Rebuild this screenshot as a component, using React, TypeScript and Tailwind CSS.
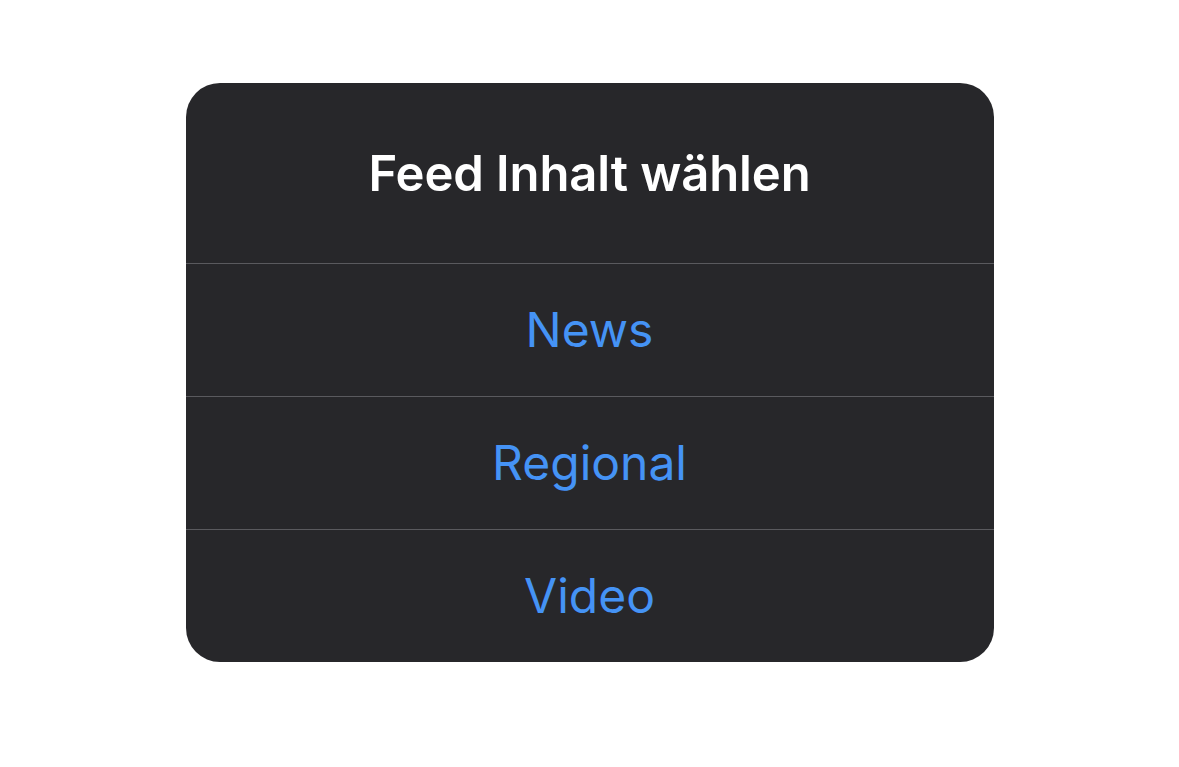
export default function App() {
  const options = ['News', 'Regional', 'Video']

  return (
    <div className="min-h-screen w-full bg-white pt-[83px]" style={{ fontFamily: 'Inter, "Noto Sans", sans-serif' }}>
      <div className="mx-auto w-[808px] overflow-hidden rounded-[34px] bg-[#27272a]">
        <div className="flex h-[180px] items-center justify-center pt-[2px]">
          <h1 className="text-[49px] font-semibold tracking-[-0.1px] text-white">Feed Inhalt wählen</h1>
        </div>
        {options.map((label) => (
          <button
            key={label}
            className="flex h-[133px] w-full items-center justify-center border-t border-[#5a5a5e] text-[48px] text-[#4593f5]"
          >
            {label}
          </button>
        ))}
      </div>
    </div>
  )
}
